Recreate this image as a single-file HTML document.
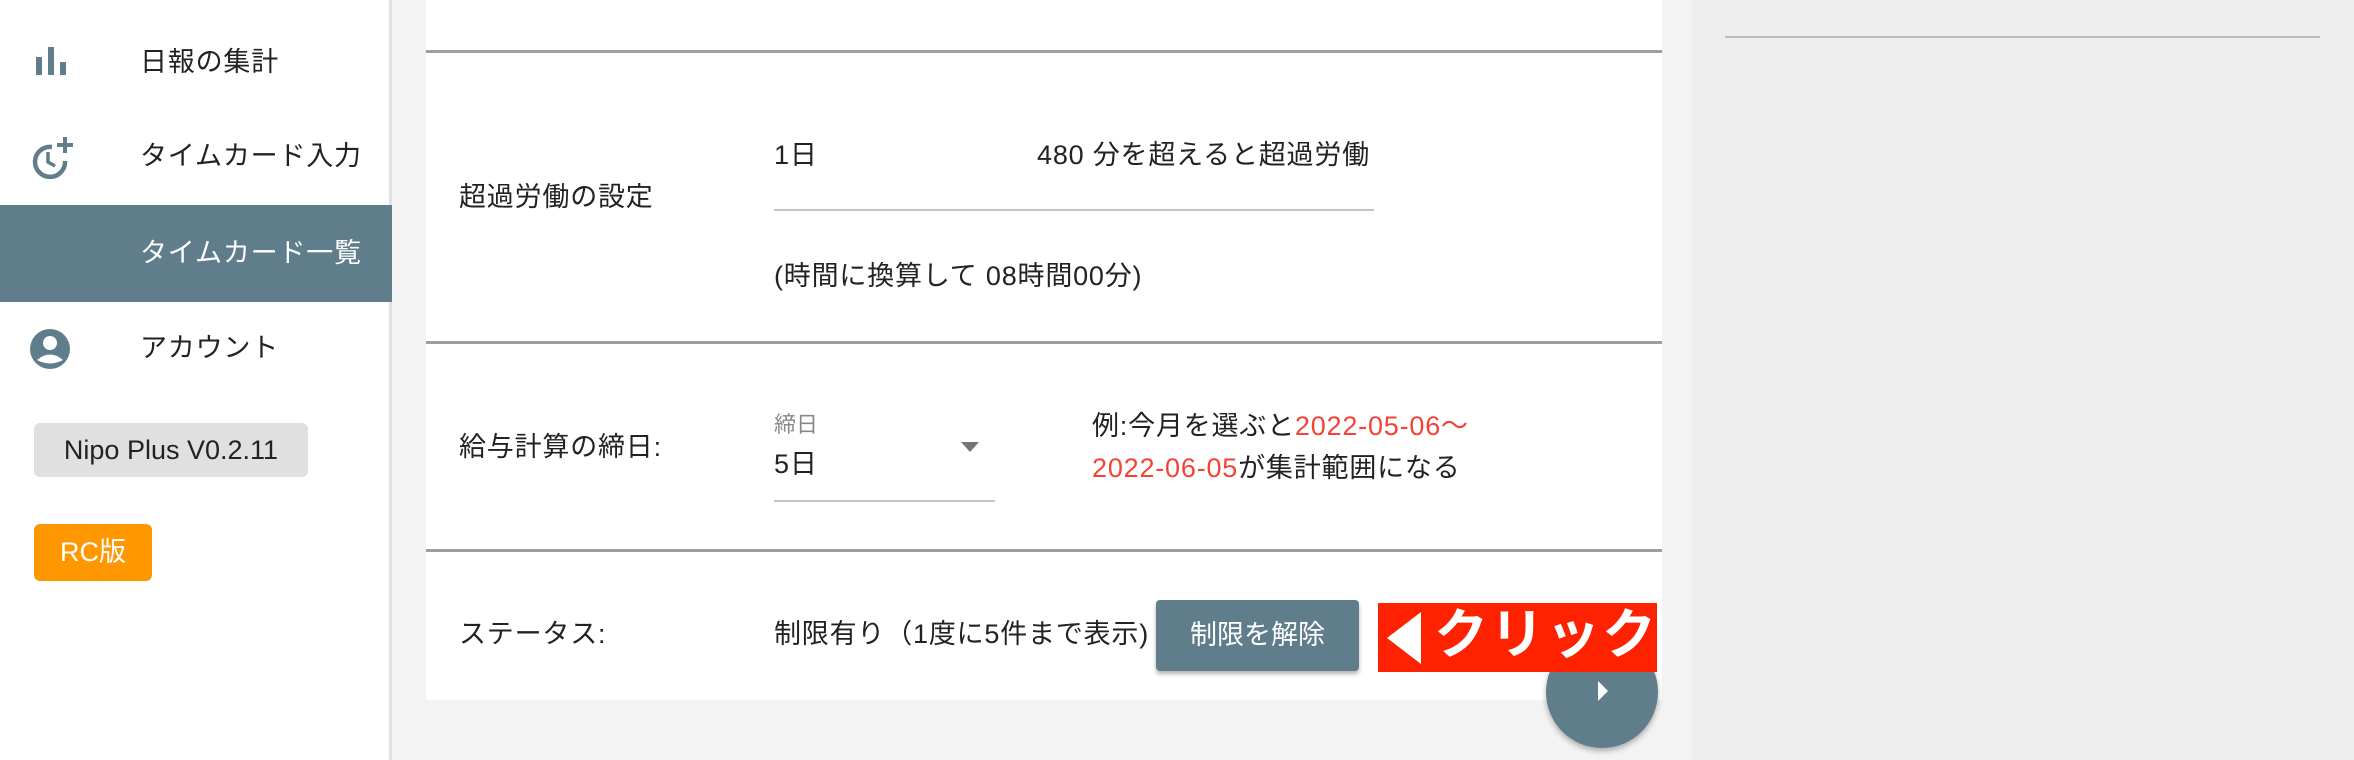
<!DOCTYPE html>
<html><head><meta charset="utf-8"><style>
*{margin:0;padding:0;box-sizing:border-box}
body{width:2354px;height:760px;overflow:hidden;background:#f3f3f3;font-family:"Liberation Sans","Noto Sans CJK JP",sans-serif;color:#222;position:relative}
.a{position:absolute;white-space:nowrap}
.t{font-size:27px;line-height:32px;letter-spacing:0.8px}
</style></head><body>
<div class="a" style="left:0;top:0;width:392px;height:760px;background:#fff;border-right:3px solid #e2e2e2"></div>
<svg class="a" style="left:36px;top:47px" width="30" height="28" viewBox="0 0 30 28"><rect x="0" y="10" width="6" height="18" fill="#607d8b"/><rect x="12" y="0" width="6" height="28" fill="#607d8b"/><rect x="24" y="15" width="6" height="13" fill="#607d8b"/></svg>
<div class="a t" style="left:140px;top:46px">日報の集計</div>
<svg class="a" style="left:28px;top:135px" width="46" height="44" viewBox="0 0 46 44"><path d="M24 12 A15 15 0 1 0 37 26" fill="none" stroke="#607d8b" stroke-width="4.5"/><path d="M20 17 V27 L27 31" fill="none" stroke="#607d8b" stroke-width="3.5"/><path d="M37 2 V18 M29 10 H45" stroke="#607d8b" stroke-width="4"/></svg>
<div class="a t" style="left:140px;top:140px">タイムカード入力</div>
<div class="a" style="left:0;top:205px;width:392px;height:97px;background:#607d8b"></div>
<div class="a t" style="left:140px;top:237px;color:#fff">タイムカード一覧</div>
<svg class="a" style="left:30px;top:329px" width="40" height="40" viewBox="0 0 40 40"><circle cx="20" cy="20" r="20" fill="#607d8b"/><circle cx="20" cy="14" r="7" fill="#fff"/><path d="M7 31 Q20 20 33 31 Q20 38 7 31Z" fill="#fff"/></svg>
<div class="a t" style="left:140px;top:332px">アカウント</div>
<div class="a" style="left:34px;top:423px;width:274px;height:54px;background:#e0e0e0;border-radius:6px;font-size:27px;line-height:54px;text-align:center;color:#222">Nipo Plus V0.2.11</div>
<div class="a" style="left:34px;top:524px;width:118px;height:57px;background:#ff9800;border-radius:6px;font-size:27px;line-height:57px;text-align:center;color:#fff">RC版</div>

<div class="a" style="left:1692px;top:0;width:662px;height:760px;background:#eee"></div>
<div class="a" style="left:1725px;top:36px;width:595px;height:2px;background:#bbb"></div>

<div class="a" style="left:426px;top:0;width:1236px;height:700px;background:#fff"></div>
<div class="a" style="left:426px;top:50px;width:1236px;height:3px;background:#9e9e9e"></div>
<div class="a" style="left:426px;top:341px;width:1236px;height:3px;background:#9e9e9e"></div>
<div class="a" style="left:426px;top:549px;width:1236px;height:3px;background:#9e9e9e"></div>

<div class="a t" style="left:459px;top:181px">超過労働の設定</div>
<div class="a t" style="left:774px;top:139px">1日</div>
<div class="a t" style="left:1037px;top:139px">480 分を超えると超過労働</div>
<div class="a" style="left:774px;top:209px;width:600px;height:2px;background:#c4c4c4"></div>
<div class="a t" style="left:774px;top:260px">(時間に換算して 08時間00分)</div>

<div class="a t" style="left:459px;top:431px">給与計算の締日:</div>
<div class="a" style="left:774px;top:412px;font-size:22px;line-height:26px;color:#888">締日</div>
<div class="a t" style="left:774px;top:448px">5日</div>
<svg class="a" style="left:961px;top:442px" width="18" height="10"><path d="M0 0H18L9 10Z" fill="#757575"/></svg>
<div class="a" style="left:774px;top:500px;width:221px;height:2px;background:#c4c4c4"></div>
<div class="a t" style="left:1092px;top:410px">例:今月を選ぶと<span style="color:#f44336">2022-05-06〜</span></div>
<div class="a t" style="left:1092px;top:452px"><span style="color:#f44336">2022-06-05</span>が集計範囲になる</div>

<div class="a t" style="left:459px;top:618px">ステータス:</div>
<div class="a t" style="left:774px;top:618px">制限有り（1度に5件まで表示)</div>
<div class="a" style="left:1156px;top:600px;width:203px;height:71px;background:#607d8b;border-radius:4px;box-shadow:0 3px 4px rgba(0,0,0,.3);color:#fff;font-size:27px;line-height:71px;text-align:center">制限を解除</div>
<div class="a" style="left:1546px;top:636px;width:112px;height:112px;border-radius:50%;background:#607d8b;box-shadow:0 3px 6px rgba(0,0,0,.3)"></div>
<svg class="a" style="left:1598px;top:681px" width="10" height="20"><path d="M0 0L10 10L0 20Z" fill="#fff"/></svg>
<div class="a" style="left:1378px;top:603px;width:279px;height:69px;background:#ff2200"></div>
<svg class="a" style="left:1387px;top:612px" width="34" height="52"><path d="M34 0V52L0 26Z" fill="#fff"/></svg>
<div class="a" style="left:1434px;top:600px;font-size:54px;line-height:70px;font-weight:bold;color:#fff;letter-spacing:2px">クリック</div>
</body></html>
